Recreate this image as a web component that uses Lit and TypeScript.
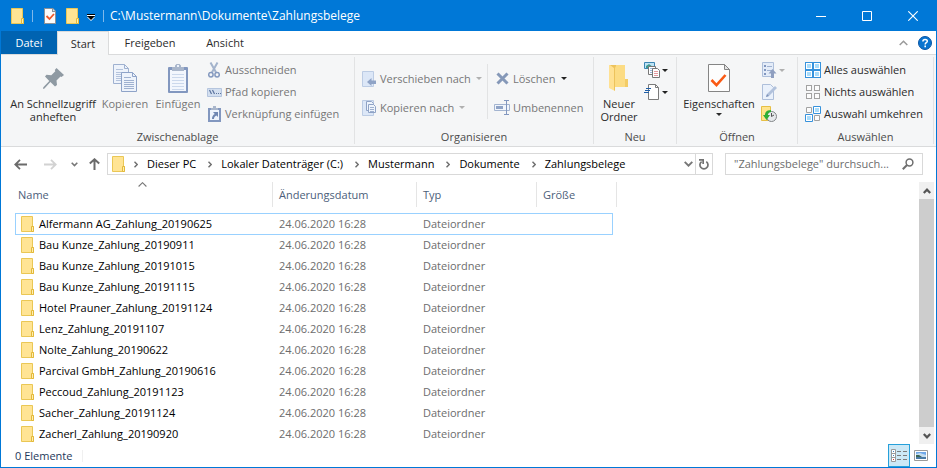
import { LitElement, html, svg, css, nothing, TemplateResult } from "lit";
import { customElement, property } from "lit/decorators.js";
import { classMap } from "lit/directives/class-map.js";

type Icon = { w: number; h: number; body: TemplateResult };

const sheetLines = (x: number, y: number, w: number, n: number, step: number, color: string) =>
  svg`${Array.from({ length: n }, (_, i) => svg`<rect x=${x} y=${y + i * step} width=${w} height="1" fill=${color}/>`)}`;

const icons: Record<string, Icon> = {
  folder: { w: 13, h: 16, body: svg`
    <path d="M.5.5h11v10h1v5H.5z" fill="#ffe591" stroke="#eac755"/>
    <path d="M1 1h10v14H1z" fill="#ffe494"/>
    <path d="M10.500 15.500v-5h2v5z" fill="#ffeeb0" stroke="#e3b93a"/>` },
  qatCheck: { w: 12, h: 16, body: svg`
    <path d="M0 0h9l3 3v13H0z" fill="#8c9299"/><path d="M1 1h7v3h3v11H1z" fill="#fbfbfb"/>
    <path d="M9 1l2 2H9z" fill="#dfe3e6"/><path d="M2.500 8l3 3 4.500-5" fill="none" stroke="#f1582a" stroke-width="1.800"/>` },
  qatArrow: { w: 8, h: 7, body: svg`<path d="M0 0h8v1H0z" fill="#000"/><path d="M0 1h8v1H0z" fill="#fff"/><path d="M0 3h8L4 7z" fill="#fff"/><path d="M0 2h8L4 6z" fill="#000"/>` },
  min: { w: 10, h: 10, body: svg`<path d="M0 5h10v1H0z" fill="#fff"/>` },
  max: { w: 10, h: 10, body: svg`<path d="M.5.5h9v9h-9z" fill="none" stroke="#fff"/>` },
  close: { w: 10, h: 10, body: svg`<path d="M.3.3l9.400 9.400M9.700.3L.3 9.700" stroke="#fff" stroke-width="1.100"/>` },
  collapse: { w: 9, h: 6, body: svg`<path d="M.7 5L4.500 1.200 8.300 5" fill="none" stroke="#9a9a9a" stroke-width="1.500"/>` },
  help: { w: 14, h: 14, body: svg`<circle cx="7" cy="7" r="6.500" fill="#0a74cf" stroke="#0a56a5"/>
    <path d="M4.900 5.400c0-2.600 4.400-2.600 4.400-.2 0 1.500-2.100 1.500-2.100 3.200" fill="none" stroke="#fff" stroke-width="1.500"/><path d="M6.400 9.600h1.600v1.600H6.400z" fill="#fff"/>` },
  pin: { w: 21, h: 21, body: svg`<path d="M13.500 0L21 7l-2.500 2-1-.5-4 4 .5 4.500-2 1.500-4.600-4.600L1.500 20.500 0 21l.3-1.700 6-6.300L2 8.500 3.500 6.800l4.800.4 4-4-.5-1.200z" fill="#8f9aa3"/>` },
  copy: { w: 24, h: 28, body: svg`
    <path d="M.5.5h11l4 4v15H.5z" fill="#eef3fb" stroke="#9fb1d0"/><path d="M11.500.5v4h4" fill="none" stroke="#9fb1d0"/>
    ${sheetLines(3, 5, 7, 1, 2, "#b4c3dc")}${sheetLines(3, 8, 10, 5, 2, "#b4c3dc")}
    <path d="M8.500 8.500h11l4 4v15h-15z" fill="#eef3fb" stroke="#8ea3c8"/><path d="M19.500 8.500v4h4" fill="none" stroke="#8ea3c8"/>
    ${sheetLines(11, 13, 7, 1, 2, "#9fb1d0")}${sheetLines(11, 16, 10, 5, 2, "#9fb1d0")}` },
  paste: { w: 20, h: 29, body: svg`
    <path d="M1 3h18a1 1 0 011 1v24a1 1 0 01-1 1H1a1 1 0 01-1-1V4a1 1 0 011-1z" fill="#8297bf"/>
    <path d="M2 6h16v21H2z" fill="#f2f6fd"/>${sheetLines(4, 10, 12, 6, 3, "#cbd8ec")}
    <path d="M4 3h3V1.500L8.500 0h3L13 1.500V3h3v4H4z" fill="#a9b6cb"/><path d="M9 1h2v2H9z" fill="#eef3fb"/>` },
  cut: { w: 12, h: 16, body: svg`<path d="M2.500.5l5.600 10M9.500.5l-5.600 10" stroke="#a3b3cc" stroke-width="2"/>
    <circle cx="2.900" cy="12.800" r="2.200" fill="none" stroke="#8499bf" stroke-width="1.500"/><circle cx="9.100" cy="12.800" r="2.200" fill="none" stroke="#8499bf" stroke-width="1.500"/>` },
  path: { w: 15, h: 9, body: svg`<path d="M.5.5h14v8H.5z" fill="#d3dff0" stroke="#b5c5de"/>
    <path d="M2.500 2l2 4M5.500 2l2 4" stroke="#5c759f" stroke-width="1.200"/><path d="M9 5h1v1H9zM11 5h1v1h-1zM13 5h1v1h-1z" fill="#5c759f"/>` },
  pasteLink: { w: 13, h: 16, body: svg`<path d="M0 2h13v14H0z" fill="#8297bf"/><path d="M2 4h9v10H2z" fill="#eef4fd"/>
    <path d="M3 2h2V0h3v2h2v2H3z" fill="#a9b6cb"/><path d="M5 6h5v5L8.500 9.500C6.500 10.500 6 11.500 6 13H4c0-2.500 1-4 2.800-5z" fill="#6f87b3"/>` },
  moveTo: { w: 14, h: 16, body: svg`<path d="M.5.5h11v15H.5z" fill="#dce7f7" stroke="#bccce4"/><path d="M5 11l4.500-4v2.500H14v3.500H9.500V15z" fill="#8fa3c6"/>` },
  copyTo: { w: 14, h: 16, body: svg`<path d="M.5.5h11v15H.5z" fill="#dce7f7" stroke="#bccce4"/>
    <path d="M4.500 1.500h5l2 2v7h-7z" fill="#eef4fc" stroke="#8fa3c6"/><path d="M6.500 4.500h5l2 2v6h-7z" fill="#eef4fc" stroke="#8fa3c6"/>${sheetLines(8, 7, 4, 3, 2, "#9fb1d0")}` },
  del: { w: 13, h: 13, body: svg`<path d="M1.500 1.500l10 10M11.500 1.500l-10 10" stroke="#8598b8" stroke-width="3"/>` },
  rename: { w: 16, h: 15, body: svg`<path d="M.5 4.500h15v6H.5z" fill="#f2f6fc" stroke="#a3b4d0"/><path d="M2 6h7v3H2z" fill="#8fa3c6"/>
    <path d="M10 .5h5M10 14.500h5M12.500 1v13" stroke="#8297bf"/>` },
  newFolder: { w: 20, h: 28, body: svg`<path d="M6 1h10v14h3v8H6z" fill="#fcdc84"/><path d="M16 15h3v8h-3z" fill="#f3cc66"/>
    <path d="M0 1h6v26l-6-3z" fill="#ffe193"/><path d="M1 1h6v1l-1 2v23l-1-1V4z" fill="#edc35c"/>` },
  newItem: { w: 16, h: 16, body: svg`<path d="M.5.5h10v6H.5z" fill="#bfe3f5" stroke="#3b86b4"/><path d="M2 4l3-2 4 3v1H2z" fill="#3f9a8f"/>
    <path d="M4.500 4.500h7v8h-7z" fill="#fff" stroke="#777"/>${sheetLines(6, 6, 4, 3, 2, "#9bb7da")}
    <path d="M8.500 6.500h5l2 2v7h-7z" fill="#fff" stroke="#777"/>${sheetLines(10, 9, 4, 3, 2, "#e69aa0")}` },
  quickAccess: { w: 16, h: 16, body: svg`<path d="M4.500.5h7l3 3v12h-10z" fill="#fff" stroke="#7b7b7b"/><path d="M11.500.5v3h3" fill="none" stroke="#7b7b7b"/>
    <path d="M2 4h5v1H2zM1 6h5v1H1zM0 8h5v1H0z" fill="#1f5fa8"/>` },
  props: { w: 22, h: 28, body: svg`<path d="M.5.5h16l5 5v22H.5z" fill="#fdfdfd" stroke="#858585"/><path d="M16.500.5v5h5z" fill="#e4e4e4" stroke="#858585"/>
    <path d="M3.500 16l5 5.200L17.500 11" fill="none" stroke="#fa5a14" stroke-width="2.600"/>` },
  open: { w: 15, h: 16, body: svg`<path d="M.5.5h11v14H.5z" fill="#e4ecf8" stroke="#aebfda"/><path d="M2 3h2v2H2zM2 7h2v2H2zM2 11h2v2H2z" fill="#8297bf"/>
    ${sheetLines(5, 4, 5, 2, 4, "#9fb1d0")}<path d="M10.500 7l4 4.500H12V16H9v-4.500H6.500z" fill="#8f9fc0"/>` },
  edit: { w: 15, h: 16, body: svg`<path d="M.5.5h8l3 3v12H.5z" fill="#eaf1fb" stroke="#aebfda"/><path d="M4 13l1-3 8-8 2 2-8 8z" fill="#b2c2dc"/><path d="M4 13l1-3 2 2z" fill="#7e93ba"/>` },
  history: { w: 16, h: 16, body: svg`<path d="M.5.5h9v14H.5z" fill="#ffe48c" stroke="#e6bf45"/>
    <circle cx="10.500" cy="10.500" r="5" fill="#e6e9ec" stroke="#808487"/><path d="M10.500 7v3.500L13 9" fill="none" stroke="#555"/>
    <path d="M10 4C5 4 4 7 4 9H2l3.500 5L9 9H6.800C7 7.500 8 6 10 6z" fill="#2fae35"/>` },
  all: { w: 16, h: 16, body: svg`${[0, 8].map(x => [0, 8].map(y => svg`<rect x=${x + 0.5} y=${y + 0.5} width="7" height="7" fill="#fff" stroke="#3692dc"/><rect x=${x + 2} y=${y + 2} width="4" height="4" fill="#a9dcfa"/>`))}` },
  none: { w: 16, h: 16, body: svg`${[1, 9].map(x => [1, 9].map(y => svg`<rect x=${x + 0.5} y=${y + 0.5} width="5" height="5" fill="#fcfcfc" stroke="#a2a2a2"/>`))}` },
  invert: { w: 16, h: 16, body: svg`<path d="M1.500 1.500h5v5h-5zM9.500 9.500h5v5h-5z" fill="#fcfcfc" stroke="#a2a2a2"/>
    <path d="M8.500.5h7v7h-7zM.5 8.500h7v7h-7z" fill="#fff" stroke="#3692dc"/><path d="M10 2h4v4h-4zM2 10h4v4H2z" fill="#a9dcfa"/>` },
  drop: { w: 6, h: 3, body: svg`<path d="M0 0h6L3 3z" fill="currentColor"/>` },
  back: { w: 13, h: 11, body: svg`<path d="M6 .8L1.300 5.500 6 10.200M1.500 5.500H13" fill="none" stroke="#6b6b6b" stroke-width="1.800"/>` },
  forward: { w: 13, h: 11, body: svg`<path d="M7 .8l4.700 4.700L7 10.200M11.500 5.500H0" fill="none" stroke="#d2d2d2" stroke-width="1.800"/>` },
  recent: { w: 7, h: 5, body: svg`<path d="M.7.7l2.800 2.800L6.300.7" fill="none" stroke="#777" stroke-width="1.600"/>` },
  up: { w: 11, h: 12, body: svg`<path d="M.8 5.500l4.700-4.200 4.700 4.200M5.500 1.500V12" fill="none" stroke="#6b6b6b" stroke-width="2"/>` },
  crumb: { w: 4, h: 7, body: svg`<path d="M.5.700L3.200 3.500.5 6.300" fill="none" stroke="#6f6f6f" stroke-width="1.400"/>` },
  past: { w: 9, h: 6, body: svg`<path d="M.7.900l3.800 3.800L8.300.9" fill="none" stroke="#777" stroke-width="1.900"/>` },
  refresh: { w: 10, h: 12, body: svg`<path d="M7.300 3.600A4 4 0 112.600 3.600" fill="none" stroke="#737373" stroke-width="1.700"/><path d="M0 1h5v5H3.300V2.700H0z" fill="#737373"/>` },
  search: { w: 12, h: 12, body: svg`<circle cx="7.500" cy="4.500" r="3.400" fill="none" stroke="#6f6f6f" stroke-width="1.500"/><path d="M5 7L.8 11.200" stroke="#6f6f6f" stroke-width="2"/>` },
  sort: { w: 9, h: 5, body: svg`<path d="M.6 4.500l3.900-3.800 3.900 3.800" fill="none" stroke="#777" stroke-width="1.100"/>` },
  scrollUp: { w: 8, h: 6, body: svg`<path d="M.8 5L4 1.700 7.200 5" fill="none" stroke="#555" stroke-width="2.200"/>` },
  scrollDown: { w: 8, h: 6, body: svg`<path d="M.8 1L4 4.300 7.200 1" fill="none" stroke="#555" stroke-width="2.200"/>` },
  details: { w: 16, h: 13, body: svg`<path d="M.5.5h4v12h-4zM0 4.500h5M0 8.500h5" fill="#fff" stroke="#9a9a9a"/>
    <path d="M2 2h1v1H2z" fill="#3f82c0"/><path d="M2 6h1v1H2z" fill="#3f82c0"/><path d="M2 10h1v1H2z" fill="#d33"/>
    <path d="M6 2h4v1H6zM12 2h4v1h-4zM6 6h4v1H6zM12 6h4v1h-4zM6 10h4v1H6zM12 10h4v1h-4z" fill="#7b7b7b"/>` },
  thumbs: { w: 14, h: 11, body: svg`<path d="M.5.5h13v10H.5z" fill="#fff" stroke="#9a9a9a"/><path d="M2 2h10v4H2z" fill="#6ea7e8"/><path d="M2 4l4-1 6 2v2H2z" fill="#c4dcef"/>
    <path d="M2 5l3 0 3 2H2z" fill="#3c6655"/><path d="M2 7h10v2H2z" fill="#4a7aa5"/>` },
};

@customElement("x-icon")
class XIcon extends LitElement {
  @property() name = "";
  static styles = css`
    :host { display: inline-flex; flex: none; }
    svg { display: block; }
  `;
  render() {
    const i = icons[this.name];
    return html`<svg width=${i.w} height=${i.h} viewBox="0 0 ${i.w} ${i.h}" aria-hidden="true">${i.body}</svg>`;
  }
}

type Small = { icon: string; label: string; text?: string; off?: boolean; arrow?: "on" | "off" };

const crumbs = ["Dieser PC", "Lokaler Datenträger (C:)", "Mustermann", "Dokumente", "Zahlungsbelege"];
const columns = ["Name", "Änderungsdatum", "Typ", "Größe"];
const files = [
  "Alfermann AG_Zahlung_20190625",
  "Bau Kunze_Zahlung_20190911",
  "Bau Kunze_Zahlung_20191015",
  "Bau Kunze_Zahlung_20191115",
  "Hotel Prauner_Zahlung_20191124",
  "Lenz_Zahlung_20191107",
  "Nolte_Zahlung_20190622",
  "Parcival GmbH_Zahlung_20190616",
  "Peccoud_Zahlung_20191123",
  "Sacher_Zahlung_20191124",
  "Zacherl_Zahlung_20190920",
];

@customElement("app-root")
class AppRoot extends LitElement {
  static styles = css`
    :host {
      display: flex; flex-direction: column; box-sizing: border-box; min-height: 100vh;
      border: 1px solid #0078d7; border-top: 0; background: #fff; color: #000;
      font: 11px/16px "Open Sans", "Noto Sans", sans-serif;
    }
    * { box-sizing: border-box; }
    button, input { font: inherit; color: inherit; border: 0; background: none; padding: 0; margin: 0; }
    button { display: flex; align-items: center; white-space: nowrap; }
    a { color: inherit; text-decoration: none; }

    .title { display: flex; align-items: center; height: 31px; background: #0078d7; color: #fff; padding-left: 10px; }
    .title .bar { width: 1px; height: 12px; background: #7fb8ea; }
    .quick { display: flex; align-items: center; gap: 8px; padding-right: 6px; }
    .quick .wide { padding-right: 2px; padding-left: 3px; }
    .quick .more { padding-top: 4px; }
    .title h1 { font: inherit; font-size: 12px; margin: 0; flex: 1; }
    .win { width: 46px; height: 31px; justify-content: center; }

    .tabs { display: flex; height: 24px; border-bottom: 1px solid #dadbdc; align-items: stretch; color: #2b2b2b; }
    .tab { justify-content: center; }
    .tab.file { background: #0063b1; color: #fff; width: 56px; }
    .tab.active { width: 52px; margin-bottom: -1px; background: #f5f6f7; border: 1px solid #dadbdc; border-bottom: 0; }
    .tab.share { width: 82px; }
    .tab.view { width: 68px; }
    .tabs .right { margin-left: auto; display: flex; align-items: center; gap: 10px; padding-right: 4px; }

    .ribbon { display: flex; height: 92px; padding: 2px 0; background: #f5f6f7; border-bottom: 1px solid #dadbdc; color: #2b2b2b; }
    .group { display: flex; flex-direction: column; height: 87px; border-right: 1px solid #e2e3e4; }
    .group h2 { margin: 0; font: inherit; line-height: 14px; text-align: center; color: #4c4c4c; }
    .body { display: flex; flex: 1; }
    .clip { width: 354px; }
    .clip .body { padding-left: 5px; }
    .organize { width: 239px; }
    .new { width: 83px; }
    .openg { width: 121px; }
    .select { width: 136px; }
    .big { flex-direction: column; justify-content: flex-start; gap: 3px; padding-top: 5px; line-height: 13px; }
    .big .pic { height: 32px; display: flex; align-items: center; }
    .big .caption { text-align: center; white-space: pre-line; }
    .pinning { width: 94px; }
    .copying { width: 50px; }
    .pasting { width: 56px; }
    .folder { width: 50px; }
    .properties { width: 84px; }
    .off { color: #777; }
    .stack { display: flex; flex-direction: column; padding-top: 2px; }
    .small { height: 22px; gap: 3px; }
    .small .pic { width: 16px; display: flex; justify-content: center; }
    .small .arrow { margin-left: 2px; color: #222; }
    .small .arrow.dim { color: #b0b0b0; }
    .organize .stack { padding: 7px 0 0 6px; }
    .organize .small { height: 29px; }
    .organize .stack.first { width: 132px; }
    .rule { width: 1px; height: 55px; margin-top: 7px; background: #e2e3e4; }
    .select .stack { padding-left: 7px; }
    .icons .small { gap: 0; }

    .nav { display: flex; align-items: center; padding: 6px 13px 7px 12px; height: 35px; }
    .history { display: flex; align-items: center; width: 94px; }
    .history button { height: 22px; justify-content: center; }
    .history .arrowbtn { width: 15px; margin-right: 15px; }
    .history .recent { width: 7px; margin-right: 11px; margin-left: -2px; }
    .address { flex: 1; display: flex; align-items: center; height: 22px; border: 1px solid #d9d9d9; padding-left: 4px; min-width: 0; }
    .crumbs { display: flex; align-items: center; flex: 1; margin: 0; padding: 0; list-style: none; min-width: 0; }
    .crumbs li { display: flex; align-items: center; gap: 9px; padding: 0 3px 0 9px; white-space: nowrap; }
    .address .past { width: 14px; height: 20px; justify-content: center; }
    .address .reload { width: 17px; height: 20px; justify-content: center; border-left: 1px solid #d9d9d9; }
    .search { display: flex; align-items: center; width: 198px; height: 22px; margin-left: 12px; border: 1px solid #d9d9d9; padding: 0 8px; }
    .search input { flex: 1; min-width: 0; outline: 0; }
    .search input::placeholder { color: #6d6d6d; opacity: 1; }

    .main { display: flex; flex: 1; }
    .list { flex: 1; padding-left: 14px; min-width: 0; }
    .files, .files thead, .files tbody { display: block; }
    .files tr { display: grid; grid-template-columns: 258px 144px 120px 80px; }
    .files th { position: relative; height: 25px; font-weight: 400; text-align: left; color: #4c607a; padding: 5px 0 0 6px; border-right: 1px solid #e5e5e5; }
    .files th.sorted { padding-left: 3px; }
    .sort { position: absolute; top: 0; left: 123px; display: flex; }
    .files tbody { padding-top: 6px; }
    .files tbody tr { grid-template-columns: 257px 144px 120px 74px; width: 598px; height: 22px; margin-bottom: -1px; border: 1px solid transparent; align-items: center; }
    .files tbody tr.hot { border-color: #99d1ff; }
    .files td { padding: 0 0 0 6px; color: #6d6d6d; }
    .files td.name { display: flex; align-items: center; gap: 5px; padding-left: 5px; color: #000; }
    .scroll { width: 17px; display: flex; flex-direction: column; background: #f0f0f0; border-right: 2px solid #fff; }
    .scroll button { height: 17px; justify-content: center; }
    .thumb { flex: 1; background: #cdcdcd; }

    .status { display: flex; align-items: center; height: 23px; padding-left: 14px; color: #1e395b; }
    .status .count { line-height: 12px; padding-right: 10px; border-right: 1px solid #f0f0f0; }
    .views { margin-left: auto; display: flex; padding-right: 4px; }
    .views button { width: 22px; height: 23px; justify-content: center; }
    .views .on { background: #cce8f6; border: 1px solid #26a0da; }
  `;

  private big(icon: string, label: string, size: string, off = false, arrow = false) {
    return html`<button class=${classMap({ big: true, [size]: true, off })}>
      <span class="pic"><x-icon name=${icon}></x-icon></span>
      <span class="caption">${label}</span>${arrow ? html`<x-icon name="drop"></x-icon>` : nothing}
    </button>`;
  }

  private small(s: Small) {
    return html`<button class=${classMap({ small: true, off: !!s.off })} aria-label=${s.label}>
      <span class="pic"><x-icon name=${s.icon}></x-icon></span>
      ${s.text === "" ? nothing : html`<span>${s.label}</span>`}
      ${s.arrow ? html`<x-icon class=${classMap({ arrow: true, dim: s.arrow === "off" })} name="drop"></x-icon>` : nothing}
    </button>`;
  }

  render() {
    return html`
      <header class="title">
        <div class="quick">
          <x-icon name="folder"></x-icon><span class="bar"></span>
          <x-icon class="wide" name="qatCheck"></x-icon><x-icon name="folder"></x-icon>
          <x-icon class="more" name="qatArrow"></x-icon><span class="bar"></span>
        </div>
        <h1>C:\\Mustermann\\Dokumente\\Zahlungsbelege</h1>
        <button class="win" aria-label="Minimieren"><x-icon name="min"></x-icon></button>
        <button class="win" aria-label="Maximieren"><x-icon name="max"></x-icon></button>
        <button class="win" aria-label="Schließen"><x-icon name="close"></x-icon></button>
      </header>
      <nav class="tabs">
        <button class="tab file">Datei</button>
        <button class="tab active">Start</button>
        <button class="tab share">Freigeben</button>
        <button class="tab view">Ansicht</button>
        <div class="right">
          <button aria-label="Menüband minimieren"><x-icon name="collapse"></x-icon></button>
          <button aria-label="Hilfe"><x-icon name="help"></x-icon></button>
        </div>
      </nav>
      <div class="ribbon">
        <section class="group clip">
          <div class="body">
            ${this.big("pin", "An Schnellzugriff\nanheften", "pinning")}
            ${this.big("copy", "Kopieren", "copying", true)}
            ${this.big("paste", "Einfügen", "pasting", true)}
            <div class="stack">
              ${this.small({ icon: "cut", label: "Ausschneiden", off: true })}
              ${this.small({ icon: "path", label: "Pfad kopieren", off: true })}
              ${this.small({ icon: "pasteLink", label: "Verknüpfung einfügen", off: true })}
            </div>
          </div>
          <h2>Zwischenablage</h2>
        </section>
        <section class="group organize">
          <div class="body">
            <div class="stack first">
              ${this.small({ icon: "moveTo", label: "Verschieben nach", off: true, arrow: "off" })}
              ${this.small({ icon: "copyTo", label: "Kopieren nach", off: true, arrow: "off" })}
            </div>
            <div class="rule"></div>
            <div class="stack">
              ${this.small({ icon: "del", label: "Löschen", off: true, arrow: "on" })}
              ${this.small({ icon: "rename", label: "Umbenennen", off: true })}
            </div>
          </div>
          <h2>Organisieren</h2>
        </section>
        <section class="group new">
          <div class="body">
            ${this.big("newFolder", "Neuer\nOrdner", "folder")}
            <div class="stack icons">
              ${this.small({ icon: "newItem", label: "Neues Element", text: "", arrow: "on" })}
              ${this.small({ icon: "quickAccess", label: "Einfacher Zugriff", text: "", arrow: "on" })}
            </div>
          </div>
          <h2>Neu</h2>
        </section>
        <section class="group openg">
          <div class="body">
            ${this.big("props", "Eigenschaften", "properties", false, true)}
            <div class="stack icons">
              ${this.small({ icon: "open", label: "Öffnen", text: "", arrow: "off" })}
              ${this.small({ icon: "edit", label: "Bearbeiten", text: "" })}
              ${this.small({ icon: "history", label: "Verlauf", text: "" })}
            </div>
          </div>
          <h2>Öffnen</h2>
        </section>
        <section class="group select">
          <div class="body">
            <div class="stack">
              ${this.small({ icon: "all", label: "Alles auswählen" })}
              ${this.small({ icon: "none", label: "Nichts auswählen" })}
              ${this.small({ icon: "invert", label: "Auswahl umkehren" })}
            </div>
          </div>
          <h2>Auswählen</h2>
        </section>
      </div>
      <nav class="nav">
        <div class="history">
          <button class="arrowbtn" aria-label="Zurück"><x-icon name="back"></x-icon></button>
          <button class="arrowbtn" aria-label="Vorwärts"><x-icon name="forward"></x-icon></button>
          <button class="recent" aria-label="Zuletzt besucht"><x-icon name="recent"></x-icon></button>
          <button aria-label="Nach oben"><x-icon name="up"></x-icon></button>
        </div>
        <div class="address">
          <x-icon name="folder"></x-icon>
          <ol class="crumbs">${crumbs.map(c => html`<li><x-icon name="crumb"></x-icon><a href="#">${c}</a></li>`)}</ol>
          <button class="past" aria-label="Vorherige Orte"><x-icon name="past"></x-icon></button>
          <button class="reload" aria-label="Aktualisieren"><x-icon name="refresh"></x-icon></button>
        </div>
        <label class="search">
          <input type="text" aria-label="Suchen" placeholder='"Zahlungsbelege" durchsuch...' />
          <x-icon name="search"></x-icon>
        </label>
      </nav>
      <main class="main">
        <div class="list">
          <table class="files">
            <thead><tr>${columns.map((c, i) => html`<th class=${classMap({ sorted: i === 0 })}>${c}${i === 0 ? html`<span class="sort"><x-icon name="sort"></x-icon></span>` : nothing}</th>`)}</tr></thead>
            <tbody>${files.map((f, i) => html`<tr class=${classMap({ hot: i === 0 })}>
              <td class="name"><x-icon name="folder"></x-icon>${f}</td><td>24.06.2020 16:28</td><td>Dateiordner</td><td></td>
            </tr>`)}</tbody>
          </table>
        </div>
        <div class="scroll">
          <button aria-label="Nach oben blättern"><x-icon name="scrollUp"></x-icon></button>
          <div class="thumb"></div>
          <button aria-label="Nach unten blättern"><x-icon name="scrollDown"></x-icon></button>
        </div>
      </main>
      <footer class="status">
        <span class="count">0 Elemente</span>
        <div class="views">
          <button class="on" aria-label="Details"><x-icon name="details"></x-icon></button>
          <button aria-label="Große Symbole"><x-icon name="thumbs"></x-icon></button>
        </div>
      </footer>`;
  }
}
